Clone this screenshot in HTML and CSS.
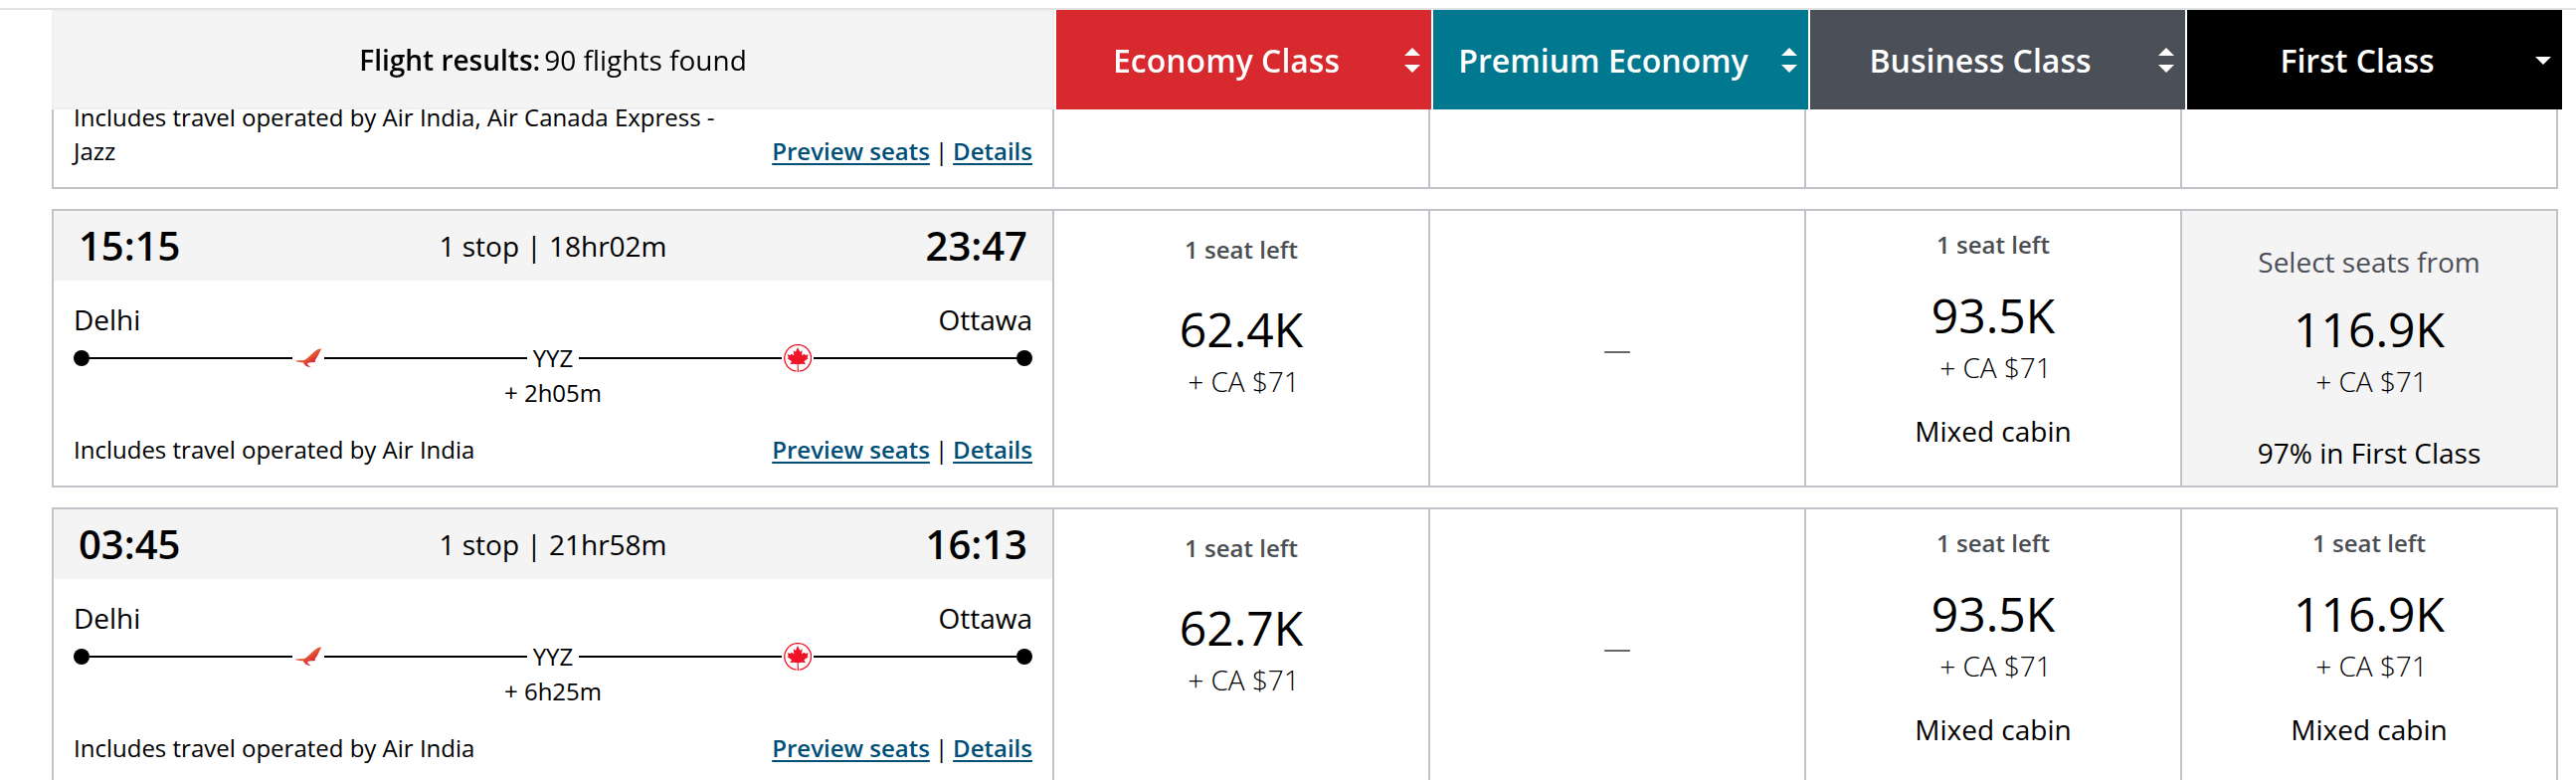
FILE: index.html
```html
<!DOCTYPE html>
<html lang="en-CA">
<head>
  <meta charset="UTF-8">
  <meta name="viewport" content="width=device-width, initial-scale=1.0">
  <title>Flight results</title>
  <link rel="stylesheet" href="styles.css">
</head>
<body>
  <!-- Shared icons -->
  <svg class="sprite" aria-hidden="true">
    <defs>
      <linearGradient id="wing" x1="0" y1="0" x2="1" y2="1">
        <stop offset="0.3" stop-color="#d8263a"/>
        <stop offset="0.5" stop-color="#e4572d"/>
        <stop offset="0.7" stop-color="#d8263a"/>
      </linearGradient>
    </defs>
    <symbol id="air-india" viewBox="0 0 84 60">
      <path fill="url(#wing)" d="M82 1 C74 2 67 5 59 12 L38 31 C33 36 27 37 20 37 L1 38 C9 41 18 42 26 43 C29 51 38 57 51 58 C45 55 40 51 39 46 C46 41 54 44 63 42 L62 37 C70 28 75 14 82 1 Z"/>
    </symbol>
    <symbol id="air-canada" viewBox="0 0 84 84">
      <path fill="none" stroke="#f01428" stroke-width="4" d="M38 81.500 A40 40 0 1 1 47 81.500"/>
      <path fill="#f01428" d="M42 9 L49 23 L56 19 L54 34 L62 29 L65 33 L74 31 L71 40 L74 43 L61 52 L66 61 L55 59 L44 61 L45 84 H41 L41 61 L30 59 L19 61 L24 52 L11 43 L14 40 L11 31 L20 33 L23 29 L31 34 L29 19 L36 23 Z"/>
    </symbol>
    <symbol id="sort-both" viewBox="0 0 16 26">
      <path fill="#fff" d="M8 0 L16 8 H0 Z M0 17 H16 L8 25 Z"/>
    </symbol>
    <symbol id="sort-down" viewBox="0 0 16 26">
      <path fill="#fff" d="M0 9 H16 L8 17 Z"/>
    </symbol>
  </svg>

  <main class="page">
    <div class="topbar"></div>

    <header class="cabins">
      <h1 class="summary"><strong>Flight results:</strong><span>90 flights found</span></h1>
      <button class="cabin economy"><span>Economy Class</span><svg><use href="#sort-both"/></svg></button>
      <button class="cabin premium"><span>Premium Economy</span><svg><use href="#sort-both"/></svg></button>
      <button class="cabin business"><span>Business Class</span><svg><use href="#sort-both"/></svg></button>
      <button class="cabin first"><span>First Class</span><svg><use href="#sort-down"/></svg></button>
    </header>

    <section class="results">
      <article class="flight scrolled">
        <div class="itinerary">
          <div class="footer">
            <p>Includes travel operated by Air India, Air Canada Express - Jazz</p>
            <div class="links"><a href="#">Preview seats</a><span>|</span><a href="#">Details</a></div>
          </div>
        </div>
        <div class="fare"></div>
        <div class="fare"></div>
        <div class="fare"></div>
        <div class="fare"></div>
      </article>

      <article class="flight">
        <div class="itinerary">
          <div class="times">
            <time>15:15</time>
            <span>1 stop | 18hr02m</span>
            <time>23:47</time>
          </div>
          <div class="cities"><span>Delhi</span><span>Ottawa</span></div>
          <div class="route">
            <i class="dot"></i><i class="line"></i>
            <svg class="carrier"><use href="#air-india"/></svg>
            <i class="line"></i><span class="stop">YYZ</span><i class="line"></i>
            <svg class="carrier"><use href="#air-canada"/></svg>
            <i class="line"></i><i class="dot"></i>
          </div>
          <div class="layover">+ 2h05m</div>
          <div class="footer">
            <p>Includes travel operated by Air India</p>
            <div class="links"><a href="#">Preview seats</a><span>|</span><a href="#">Details</a></div>
          </div>
        </div>
        <button class="fare">
          <span class="seats">1 seat left</span>
          <span class="points">62.4K</span>
          <span class="taxes">+ CA $71</span>
        </button>
        <div class="fare none">—</div>
        <button class="fare mixed">
          <span class="seats">1 seat left</span>
          <span class="points">93.5K</span>
          <span class="taxes">+ CA $71</span>
          <span class="note">Mixed cabin</span>
        </button>
        <button class="fare selected">
          <span class="from">Select seats from</span>
          <span class="points">116.9K</span>
          <span class="taxes">+ CA $71</span>
          <span class="note">97% in First Class</span>
        </button>
      </article>

      <article class="flight">
        <div class="itinerary">
          <div class="times">
            <time>03:45</time>
            <span>1 stop | 21hr58m</span>
            <time>16:13</time>
          </div>
          <div class="cities"><span>Delhi</span><span>Ottawa</span></div>
          <div class="route">
            <i class="dot"></i><i class="line"></i>
            <svg class="carrier"><use href="#air-india"/></svg>
            <i class="line"></i><span class="stop">YYZ</span><i class="line"></i>
            <svg class="carrier"><use href="#air-canada"/></svg>
            <i class="line"></i><i class="dot"></i>
          </div>
          <div class="layover">+ 6h25m</div>
          <div class="footer">
            <p>Includes travel operated by Air India</p>
            <div class="links"><a href="#">Preview seats</a><span>|</span><a href="#">Details</a></div>
          </div>
        </div>
        <button class="fare">
          <span class="seats">1 seat left</span>
          <span class="points">62.7K</span>
          <span class="taxes">+ CA $71</span>
        </button>
        <div class="fare none">—</div>
        <button class="fare mixed">
          <span class="seats">1 seat left</span>
          <span class="points">93.5K</span>
          <span class="taxes">+ CA $71</span>
          <span class="note">Mixed cabin</span>
        </button>
        <button class="fare mixed">
          <span class="seats">1 seat left</span>
          <span class="points">116.9K</span>
          <span class="taxes">+ CA $71</span>
          <span class="note">Mixed cabin</span>
        </button>
      </article>
    </section>
  </main>
</body>
</html>
```
FILE: styles.css
```css
* {
  box-sizing: border-box;
}
body {
  margin: 0;
  background: #fff;
  color: #000;
  font-family: 'Open Sans', 'Noto Sans', sans-serif;
  font-size: 24px;
  line-height: 34px;
}
button {
  margin: 0;
  border: none;
  border-radius: 0;
  background: none;
  color: inherit;
  font-family: inherit;
  cursor: pointer;
}
p {
  margin: 0;
}
.sprite {
  position: absolute;
  width: 0;
  height: 0;
}
.page {
  height: 100vh;
  overflow: hidden;
}
.topbar {
  height: 10px;
  border-bottom: 2px solid #e1e3e2;
}

/* Cabin header, stays over the list */
.cabins {
  position: sticky;
  top: 10px;
  z-index: 1;
  display: grid;
  grid-template-columns: 1008fr repeat(4, minmax(0, 377fr));
  gap: 2px;
  height: 100px;
  margin: 0 14px 0 52px;
}
.summary {
  display: flex;
  justify-content: center;
  align-items: center;
  gap: 4px;
  margin: 0;
  background: #f4f4f4;
  border: 2px solid #f0f0f0;
  font-size: 28px;
  font-weight: 400;
}
.summary strong {
  font-weight: 600;
}
.cabin {
  display: flex;
  align-items: center;
  gap: 8px;
  padding: 2px 11px 0 0;
  color: #fff;
  font-size: 32px;
  font-weight: 600;
  line-height: 42px;
}
.cabin span {
  flex: 1;
  text-align: center;
}
.cabin svg {
  width: 16px;
  height: 26px;
}
.economy {
  background: #d8292f;
}
.premium {
  background: #00788f;
}
.business {
  background: #4b4f57;
}
.first {
  background: #000;
}

.results {
  display: flex;
  flex-direction: column;
  gap: 20px;
  margin: 0 18px 0 52px;
}
.flight {
  display: grid;
  grid-template-columns: 8fr repeat(4, minmax(0, 3fr));
  border-top: 2px solid #c0c4c8;
  border-bottom: 2px solid #c0c4c8;
}
.scrolled {
  margin-top: -9px;
  border-top: none;
}

/* Left part of a flight */
.itinerary {
  border-left: 2px solid #c0c4c8;
  border-right: 2px solid #c0c4c8;
  padding-bottom: 19px;
}
.times {
  display: flex;
  justify-content: space-between;
  align-items: center;
  height: 70px;
  padding: 0 25px;
  background: #f4f4f4;
  font-size: 28px;
}
.times time {
  font-size: 40px;
  font-weight: 600;
}
.cities {
  display: flex;
  justify-content: space-between;
  padding: 18px 20px 0;
  font-size: 28px;
  line-height: 42px;
}
.route {
  display: flex;
  align-items: center;
  height: 36px;
  padding: 0 20px;
}
.dot {
  width: 16px;
  height: 16px;
  border-radius: 50%;
  background: #000;
}
.line {
  flex: 1;
  height: 2px;
  background: #000;
}
.carrier {
  width: 28px;
  height: 28px;
  margin: 0 2px;
}
.stop {
  width: 52px;
  text-align: center;
}
.layover {
  text-align: center;
}
.footer {
  display: flex;
  justify-content: space-between;
  align-items: flex-end;
  gap: 20px;
  padding: 23px 20px 0;
}
.scrolled .footer {
  padding-top: 0;
}
.links {
  display: flex;
  flex: none;
  gap: 5px;
}
.links a {
  color: #004f78;
  font-weight: 600;
  text-decoration-thickness: 2px;
  text-underline-offset: 3px;
}

/* Price cells */
.fare {
  display: flex;
  flex-direction: column;
  justify-content: flex-start;
  align-items: center;
  padding: 21px 0 0;
  border-right: 2px solid #c0c4c8;
}
.mixed {
  padding-top: 16px;
}
.selected {
  padding-top: 30px;
  background: #f4f4f4;
}
.none {
  justify-content: center;
  padding: 0;
  color: #666;
  font-size: 28px;
}
.seats {
  margin-bottom: 30px;
  color: #4b4f54;
  font-size: 24px;
  font-weight: 600;
  line-height: 36px;
}
.mixed .seats {
  margin-bottom: 21px;
}
.from {
  margin-bottom: 15px;
  color: #4b4f57;
  font-size: 28px;
  line-height: 42px;
}
.points {
  font-size: 48px;
  line-height: 64px;
}
.taxes {
  padding-left: 5px;
  font-size: 28px;
  font-weight: 300;
  line-height: 40px;
}
.note {
  margin-top: 23px;
  font-size: 28px;
  line-height: 42px;
}
.selected .note {
  margin-top: 31px;
}
```
